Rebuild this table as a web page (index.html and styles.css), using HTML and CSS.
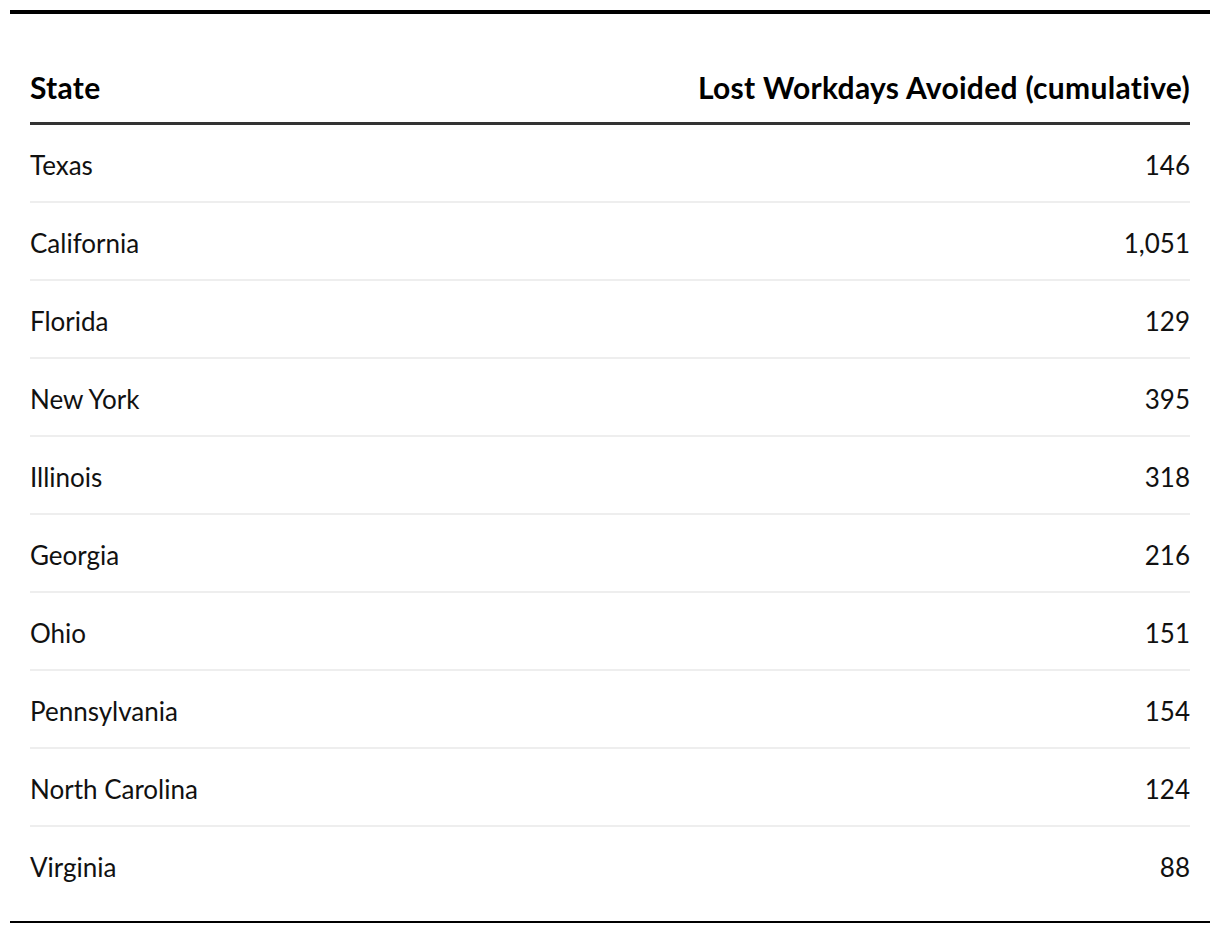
FILE: index.html
```html
<!DOCTYPE html>
<html lang="en">
<head>
<meta charset="utf-8">
<title>Lost Workdays Avoided</title>
<link rel="stylesheet" href="styles.css">
</head>
<body>
<div class="frame">
  <table class="data">
    <thead>
      <tr><th class="col-state">State</th><th class="col-num">Lost Workdays Avoided (cumulative)</th></tr>
    </thead>
    <tbody>
      <tr><td>Texas</td><td class="num">146</td></tr>
      <tr><td>California</td><td class="num">1,051</td></tr>
      <tr><td>Florida</td><td class="num">129</td></tr>
      <tr><td>New York</td><td class="num">395</td></tr>
      <tr><td>Illinois</td><td class="num">318</td></tr>
      <tr><td>Georgia</td><td class="num">216</td></tr>
      <tr><td>Ohio</td><td class="num">151</td></tr>
      <tr><td>Pennsylvania</td><td class="num">154</td></tr>
      <tr><td>North Carolina</td><td class="num">124</td></tr>
      <tr><td>Virginia</td><td class="num">88</td></tr>
    </tbody>
  </table>
</div>
</body>
</html>
```

FILE: styles.css
```css
html, body {
  margin: 0;
  padding: 0;
  background: #fff;
}
body {
  padding: 10px;
  font-family: Lato, "Liberation Sans", sans-serif;
  color: #111;
}
.frame {
  border-top: 4px solid #000;
  border-bottom: 2px solid #000;
  padding: 0 20px 18px;
}
.data {
  width: 100%;
  border-collapse: collapse;
}
.data th {
  font-size: 30px;
  font-weight: 700;
  letter-spacing: 0.3px;
  line-height: 34px;
  padding: 56px 0 18px;
  border-bottom: 3px solid #333;
  color: #000;
}
.col-state { text-align: left; }
.col-num { text-align: right; }
.data td {
  font-size: 26px;
  line-height: 32px;
  padding: 24px 0 20px;
  height: 32px;
  text-align: left;
}
.data tbody tr + tr td {
  border-top: 2px solid #eee;
}
.data td.num { text-align: right; }
```
